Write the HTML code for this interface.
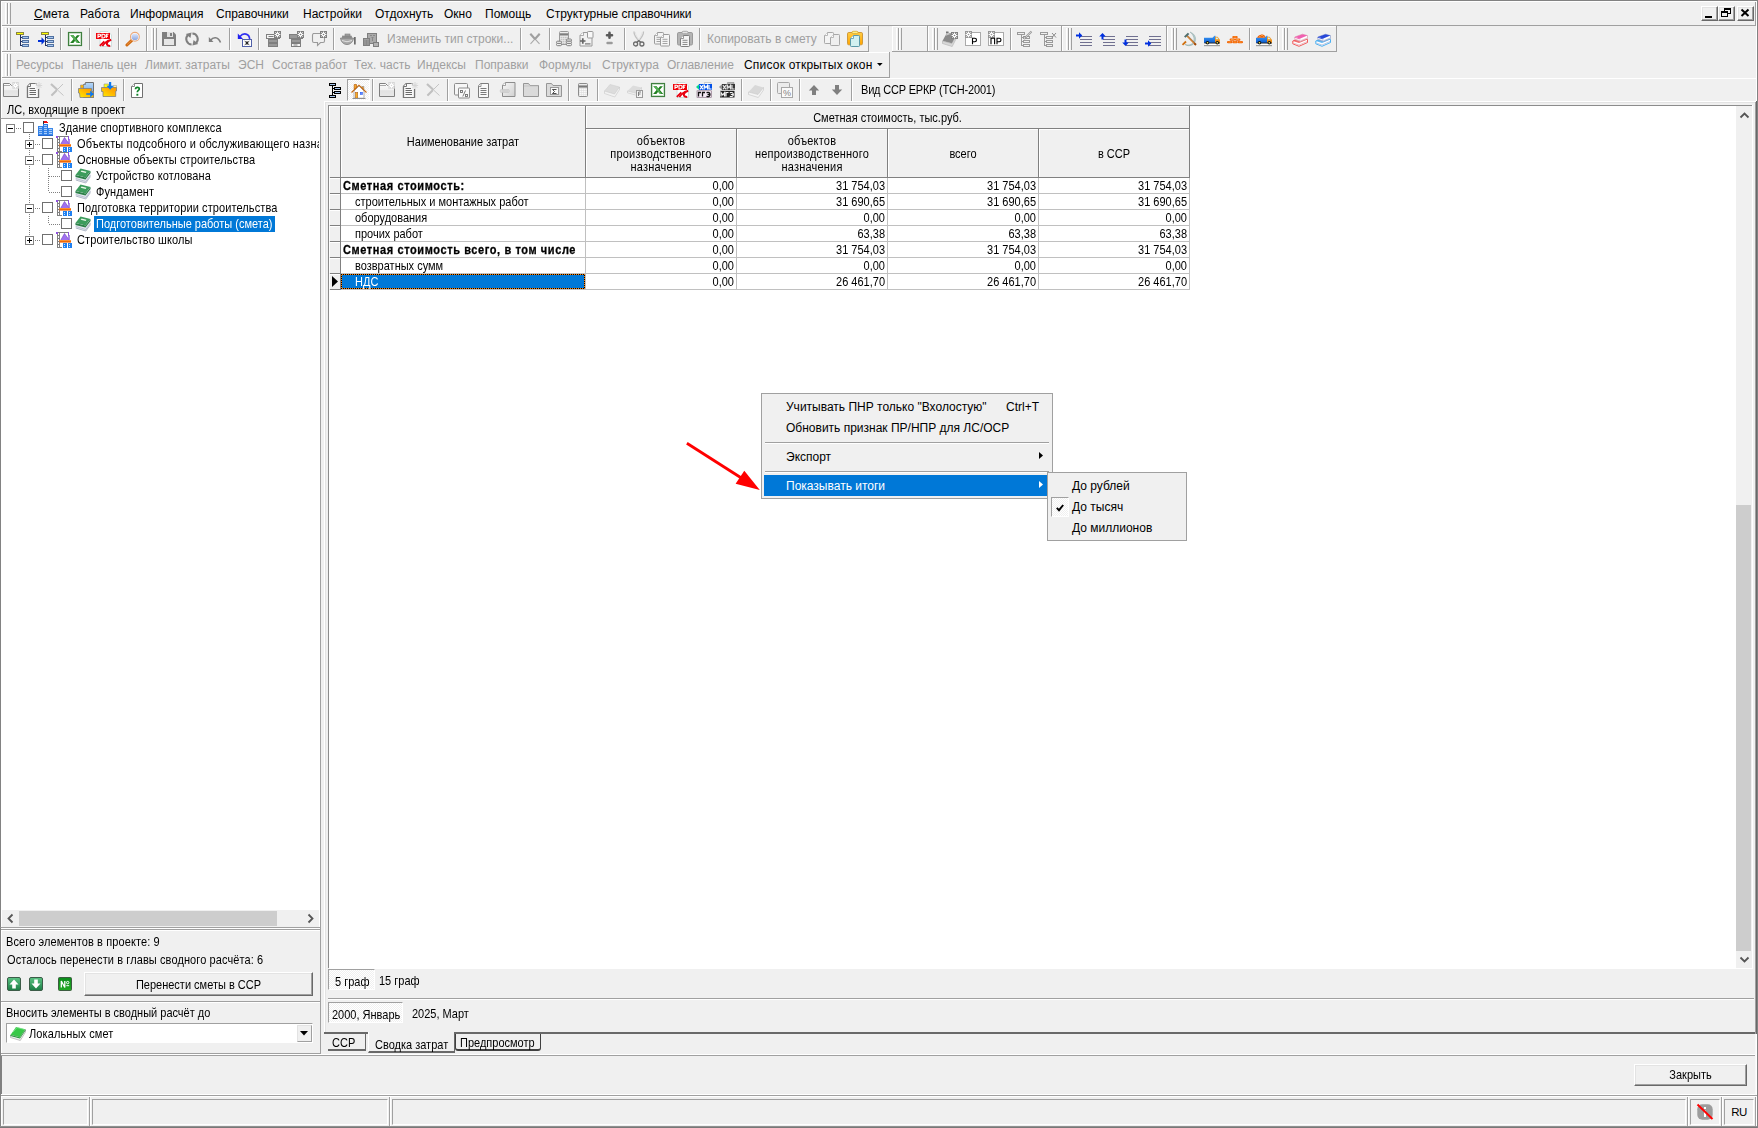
<!DOCTYPE html>
<html><head><meta charset="utf-8">
<style>
*{box-sizing:border-box;margin:0;padding:0}
html,body{width:1758px;height:1128px;overflow:hidden;background:#f0f0f0}
body{font-family:"Liberation Sans",sans-serif;font-size:11px;color:#000;position:relative}
.a{position:absolute}
.t{position:absolute;white-space:pre;line-height:14px;height:14px;transform:scaleY(1.1);transform-origin:0 11.5px;filter:grayscale(1)}
.m{font-size:12px;transform:none;filter:none}
.g{color:#a0a0a0}
.hl{position:absolute;height:1px}
.vl{position:absolute;width:1px}
.grip{position:absolute;width:5px;height:21px;border-left:1px solid #a0a0a0;border-right:1px solid #a0a0a0}
.grip:before{content:"";position:absolute;left:0;top:0;width:1px;height:100%;background:#fff;margin-left:0}
.grip2{position:absolute;width:6px;background:linear-gradient(90deg,#fff 0 1px,transparent 1px 2px,#a0a0a0 2px 3px,#fff 3px 4px,transparent 4px 5px,#a0a0a0 5px 6px)}
.sep{position:absolute;width:2px;height:22px;border-left:1px solid #a0a0a0;border-right:1px solid #fff}
.ic{position:absolute;width:16px;height:16px}
svg{position:absolute;overflow:visible}
.cb{position:absolute;width:11px;height:11px;border:1px solid #707070;background:#fff}
.pm{position:absolute;width:9px;height:9px;border:1px solid #848484;background:#fff}
.pm:before{content:"";position:absolute;left:1px;top:3px;width:5px;height:1px;background:#000}
.pm.p:after{content:"";position:absolute;left:3px;top:1px;width:1px;height:5px;background:#000}
.dh{position:absolute;height:1px;background-image:linear-gradient(90deg,#808080 50%,transparent 50%);background-size:2px 1px}
.dv{position:absolute;width:1px;background-image:linear-gradient(#808080 50%,transparent 50%);background-size:1px 2px}
.num{position:absolute;white-space:pre;line-height:14px;height:14px;text-align:right;width:60px;transform:scaleY(1.1);transform-origin:0 11.5px;filter:grayscale(1)}
.b{font-weight:bold;letter-spacing:0.6px;-webkit-text-stroke:0.25px #000}
.btn{position:absolute;border:1px solid;border-color:#fff #696969 #696969 #fff;box-shadow:inset -1px -1px 0 #a0a0a0,inset 1px 1px 0 #e3e3e3;background:#f0f0f0}
.dith{background-image:repeating-conic-gradient(#fff 0 25%,#f0f0f0 0 50%);background-size:2px 2px}
.sunk{position:absolute;border:1px solid;border-color:#a0a0a0 #fff #fff #a0a0a0}
</style></head><body>
<svg width="0" height="0" style="left:0;top:0"><defs><symbol id="tree" overflow="visible"><g shape-rendering="crispEdges"><rect x="1.5" y="1.5" width="7" height="2" fill="#ffff00" stroke="#8a8640"/><rect x="5" y="4" width="1" height="11" fill="#203060"/><rect x="5" y="6" width="2" height="1" fill="#203060"/><rect x="7.5" y="5.5" width="6" height="2" fill="#a8c8f0" stroke="#5070a0"/><rect x="5" y="10" width="2" height="1" fill="#203060"/><rect x="7.5" y="9.5" width="6" height="2" fill="#a8c8f0" stroke="#5070a0"/><rect x="5" y="14" width="2" height="1" fill="#203060"/><rect x="7.5" y="13.5" width="6" height="2" fill="#a8c8f0" stroke="#5070a0"/></g></symbol><symbol id="treearrow" overflow="visible"><g shape-rendering="crispEdges"><rect x="3.5" y="1.5" width="7" height="2" fill="#ffff00" stroke="#8a8640"/><rect x="7" y="4" width="1" height="11" fill="#203060"/><rect x="7" y="6" width="2" height="1" fill="#203060"/><rect x="9.5" y="5.5" width="6" height="2" fill="#a8c8f0" stroke="#5070a0"/><rect x="7" y="10" width="2" height="1" fill="#203060"/><rect x="9.5" y="9.5" width="6" height="2" fill="#a8c8f0" stroke="#5070a0"/><rect x="7" y="14" width="2" height="1" fill="#203060"/><rect x="9.5" y="13.5" width="6" height="2" fill="#a8c8f0" stroke="#5070a0"/></g><path d="M0 9h3.5v-2.8L7 10l-3.5 3.8V11H0z" fill="#0030d8" transform="translate(0,0)"/></symbol><symbol id="treegray" overflow="visible"><g shape-rendering="crispEdges"><rect x="2.5" y="1.5" width="7" height="2" fill="#f0f0f0" stroke="#7f7f7f"/><rect x="6" y="4" width="1" height="11" fill="#7f7f7f"/><rect x="6" y="6" width="2" height="1" fill="#7f7f7f"/><rect x="8.5" y="5.5" width="6" height="2" fill="#f0f0f0" stroke="#7f7f7f"/><rect x="6" y="10" width="2" height="1" fill="#7f7f7f"/><rect x="8.5" y="9.5" width="6" height="2" fill="#f0f0f0" stroke="#7f7f7f"/><rect x="6" y="14" width="2" height="1" fill="#7f7f7f"/><rect x="8.5" y="13.5" width="6" height="2" fill="#f0f0f0" stroke="#7f7f7f"/></g></symbol><symbol id="excel" overflow="visible"><rect x="1.500" y="1.500" width="13" height="13" fill="#fff" stroke="#3f7f3f" stroke-width="1.200"/><rect x="2.600" y="2.600" width="10.800" height="10.800" fill="none" stroke="#b8d8b8" stroke-width="0.700"/><path d="M3.300 4.300h3.300l1.600 2.100 1.800-2.100h2.900L9.700 7.800l3.500 4.200H10L8.200 9.700 6.300 12H3.100L6.800 7.800z" fill="#1f7f1f"/><path d="M3.300 4.300h3.300l5 7.700H10z" fill="#56b056"/></symbol><symbol id="pdf" overflow="visible"><path d="M4 0.500h8l3.500 3.500v11.500h-11.500z" fill="#fff" stroke="#c4d8d8" stroke-width="0.800"/><rect x="0" y="2" width="14" height="6" fill="#f00008"/><path d="M2 7V3.200h1.600a1.100 1.100 0 0 1 0 2.200H2M6 3.200V7h1.200a1.900 1.900 0 0 0 0 -3.800zM10.300 7V3.200H12.500M10.300 5.100H12" fill="none" stroke="#fff" stroke-width="1.100"/><path d="M3.800 14.800L8.300 10.300" stroke="#e80010" stroke-width="1.700"/><path d="M6.300 15C8 12.500 9.800 10.800 12.800 9.300" fill="none" stroke="#e80010" stroke-width="2"/><path d="M15.200 8.800C12 9.800 10.300 11.800 11 13.500C11.500 14.600 12.800 15 14.200 15" fill="none" stroke="#e80010" stroke-width="2.100"/></symbol><symbol id="mag" overflow="visible"><defs><linearGradient id="lg_m" x1="0" y1="0" x2="0" y2="1"><stop offset="0" stop-color="#dfe8fb"/><stop offset="1" stop-color="#8aa6e0"/></linearGradient></defs><path d="M1.900 14L6.800 9.300" stroke="#d06a10" stroke-width="3" stroke-linecap="round"/><path d="M2.200 13.500L6.500 9.400" stroke="#e89040" stroke-width="1" stroke-linecap="round"/><circle cx="9.900" cy="5.800" r="4.400" fill="#fff" stroke="#eaa878" stroke-width="1.100"/><circle cx="9.900" cy="5.800" r="3.400" fill="url(#lg_m)"/></symbol><symbol id="save" overflow="visible"><path d="M1 1h11.500L15 3.500V15H1z" fill="#7f7f7f"/><rect x="3" y="8" width="10" height="6" fill="#e6e6e6"/><rect x="6" y="1" width="6" height="5" fill="#e0e0e0"/><rect x="9" y="2" width="2" height="3" fill="#7f7f7f"/></symbol><symbol id="refresh" overflow="visible"><path d="M7.600 13.500A5.500 5.500 0 0 1 4 4" fill="none" stroke="#7f7f7f" stroke-width="2"/><path d="M8.400 2.500A5.500 5.500 0 0 1 12 12" fill="none" stroke="#7f7f7f" stroke-width="2"/><path d="M1.800 3L7.600 1.600 6.400 7z" fill="#7f7f7f"/><path d="M14.200 13L8.400 14.400 9.600 9z" fill="#7f7f7f"/></symbol><symbol id="undo" overflow="visible"><path d="M3.500 9.500C6 5.800 11 5.200 13.500 11.500" fill="none" stroke="#7f7f7f" stroke-width="1.600"/><path d="M1.800 6V11H6.500z" fill="#7f7f7f"/></symbol><symbol id="undoblue" overflow="visible"><path d="M3 5.500C6 1.800 12.500 1.500 12.800 9" fill="none" stroke="#3030f0" stroke-width="1.700"/><path d="M0.800 2.500V8H6z" fill="#2020f0"/><rect x="5.500" y="8.500" width="9" height="7" fill="#fff" stroke="#5060a8"/><path d="M7.700 10.200l4.600 3.600M12.300 10.200l-4.600 3.600M10 10v4" stroke="#000" stroke-width="0.800"/></symbol><symbol id="stack1" overflow="visible"><rect x="0.500" y="3.500" width="13" height="4" fill="#f4f4f4" stroke="#7f7f7f"/><path d="M2.500 5.500h5" stroke="#7f7f7f" stroke-width="1"/><rect x="2.500" y="8.500" width="9" height="3" fill="#999" stroke="#7f7f7f"/><rect x="2.500" y="12.500" width="9" height="3" fill="#999" stroke="#7f7f7f"/><rect x="8" y="0" width="7" height="7" fill="#7f7f7f"/><path d="M11.5 0.6v5.800M8.6 3.5h5.800M9.4 1.4l4.200 4.200M13.6 1.4l-4.200 4.200" stroke="#fff" stroke-width="1"/><circle cx="11.5" cy="3.5" r="1.900" fill="#fff"/><circle cx="11.5" cy="3.5" r="0.800" fill="#7f7f7f"/></symbol><symbol id="stack2" overflow="visible"><rect x="0.500" y="3.500" width="13" height="4" fill="#999" stroke="#7f7f7f"/><rect x="2.500" y="8.500" width="9" height="3" fill="#999" stroke="#7f7f7f"/><rect x="2.500" y="12.500" width="9" height="3" fill="#f4f4f4" stroke="#7f7f7f"/><path d="M4.500 14h4" stroke="#7f7f7f" stroke-width="1"/><rect x="8" y="0" width="7" height="7" fill="#7f7f7f"/><path d="M11.5 0.6v5.800M8.6 3.5h5.800M9.4 1.4l4.200 4.200M13.6 1.4l-4.200 4.200" stroke="#fff" stroke-width="1"/><circle cx="11.5" cy="3.5" r="1.900" fill="#fff"/><circle cx="11.5" cy="3.5" r="0.800" fill="#7f7f7f"/></symbol><symbol id="bubble" overflow="visible"><path d="M2 2.500h8M13.500 6.500v3.500q0 1.500 -1.500 1.500h-2.500l-3 3v-3h-3.500q-1.500 0 -1.500 -1.500v-6q0 -1.500 1.500 -1.500" fill="none" stroke="#9a9a9a" stroke-width="1.100"/><rect x="9" y="0" width="7" height="7" fill="#7f7f7f"/><path d="M12.5 0.6v5.800M9.6 3.5h5.800M10.4 1.4l4.200 4.200M14.6 1.4l-4.200 4.200" stroke="#fff" stroke-width="1"/><circle cx="12.5" cy="3.5" r="1.900" fill="#fff"/><circle cx="12.5" cy="3.5" r="0.800" fill="#7f7f7f"/></symbol><symbol id="bowl" overflow="visible"><path d="M0.500 7h13c-0.500 4-3 6.500-6.500 6.500S1 11 0.500 7z" fill="#a8a8a8" stroke="#7f7f7f" stroke-width="0.800"/><rect x="2.500" y="5" width="9" height="2" fill="#909090" stroke="#7f7f7f" stroke-width="0.600"/><rect x="5" y="3" width="5" height="2" fill="#a0a0a0" stroke="#7f7f7f" stroke-width="0.600"/><path d="M2 9.500q5 2.500 10 0" fill="none" stroke="#e0e0e0" stroke-width="1"/><rect x="14.300" y="6" width="1.200" height="7.500" fill="#333"/></symbol><symbol id="bldgray" overflow="visible"><rect x="4.500" y="0.500" width="9" height="10" fill="#aaa" stroke="#7f7f7f"/><rect x="0.500" y="5.500" width="6" height="7" fill="#a0a0a0" stroke="#7f7f7f"/><path d="M2 7v5M3.500 7v5M5 7v5" stroke="#7f7f7f" stroke-width="0.700"/><path d="M7 2.500h2M10 2.500h2M8.500 4.500h2M9.500 5v3" stroke="#7f7f7f" stroke-width="0.800"/><rect x="10.500" y="9.500" width="5" height="4" fill="#b4b4b4" stroke="#7f7f7f"/></symbol><symbol id="xgray" overflow="visible"><path d="M1.500 1L10.500 10.800" stroke="#a8a8a8" stroke-width="1.100"/><path d="M10.500 1L1.500 10.800" stroke="#a8a8a8" stroke-width="1.100"/><path d="M1.300 0.800l4.700 5.200M10.700 0.800L6 6" stroke="#a0a0a0" stroke-width="2.100"/></symbol><symbol id="calccoin" overflow="visible"><rect x="3.500" y="0.500" width="9" height="13" rx="1" fill="#ececec" stroke="#9a9a9a"/><rect x="4" y="2.300" width="8" height="2.200" fill="#7f7f7f"/><g fill="#c4c4c4"><rect x="4.6" y="5.8" width="1.500" height="1.300"/><rect x="4.6" y="7.8" width="1.500" height="1.300"/><rect x="4.6" y="9.8" width="1.500" height="1.300"/><rect x="4.6" y="11.7" width="1.500" height="1.300"/><rect x="6.6" y="5.8" width="1.500" height="1.300"/><rect x="6.6" y="7.8" width="1.500" height="1.300"/><rect x="6.6" y="9.8" width="1.500" height="1.300"/><rect x="6.6" y="11.7" width="1.500" height="1.300"/><rect x="8.6" y="5.8" width="1.500" height="1.300"/><rect x="8.6" y="7.8" width="1.500" height="1.300"/><rect x="8.6" y="9.8" width="1.500" height="1.300"/><rect x="8.6" y="11.7" width="1.500" height="1.300"/><rect x="10.4" y="5.8" width="1.500" height="1.300"/><rect x="10.4" y="7.8" width="1.500" height="1.300"/><rect x="10.4" y="9.8" width="1.500" height="1.300"/><rect x="10.4" y="11.7" width="1.500" height="1.300"/></g><g fill="#f0f0f0" stroke="#7f7f7f" stroke-width="1"><rect x="0.500" y="10.200" width="5" height="2.300" rx="1.100"/><rect x="0.500" y="12.400" width="5" height="2.300" rx="1.100"/><rect x="10.500" y="8" width="5" height="2.300" rx="1.100"/><rect x="10.500" y="10.200" width="5" height="2.300" rx="1.100"/><rect x="10.500" y="12.400" width="5" height="2.300" rx="1.100"/></g></symbol><symbol id="docpm" overflow="visible"><path d="M4 1.500h9v13.500h-12v-10.500z" fill="#f2f2f2" stroke="#9a9a9a"/><path d="M1 4.500h3.500v-3" fill="#fff" stroke="#9a9a9a" stroke-width="0.800"/><rect x="8.500" y="0.500" width="5.500" height="6.500" rx="0.800" fill="#f8f8f8" stroke="#9a9a9a"/><path d="M1 10h5.500M3.800 7.300v5.400" stroke="#666" stroke-width="1.700"/><rect x="6" y="12" width="5.500" height="1.700" fill="#9a9a9a"/></symbol><symbol id="pm" overflow="visible"><path d="M3.500 1.800v5M1 4.300h5" stroke="#5a5a5a" stroke-width="2.600" stroke-linecap="round"/><rect x="0.300" y="10.800" width="6.500" height="2.500" rx="1.200" fill="#9a9a9a"/></symbol><symbol id="scissors" overflow="visible"><path d="M2 0.500c-0.300 3 1.500 6 6.800 11.500M11.500 0.500c0.300 3-1.500 6-6.800 11.500" fill="none" stroke="#c0c0c0" stroke-width="1.300"/><path d="M3.200 1c0.500 3 2 5.500 4 8M10.300 1c-0.500 3-2 5.500-4 8" fill="none" stroke="#e4e4e4" stroke-width="1"/><ellipse cx="3.600" cy="13" rx="2" ry="2" fill="none" stroke="#6c6c6c" stroke-width="1.300"/><ellipse cx="9.900" cy="13" rx="2" ry="2" fill="none" stroke="#6c6c6c" stroke-width="1.300"/><path d="M4.800 11.300L6.800 9.600 8.800 11.300" fill="none" stroke="#6c6c6c" stroke-width="1.300"/></symbol><symbol id="copy" overflow="visible"><path d="M3.5 1.5h5.2q0.800 0 0.800 0.800v9.9q0 0.800 -0.800 0.800h-7.4q-0.800 0 -0.800 -0.800v-7.7z" fill="#f4f4f4" stroke="#9a9a9a" stroke-width="1"/><path d="M0.5 4.5h3v-3" fill="#fff" stroke="#9a9a9a" stroke-width="0.8"/><path d="M2.5 6.3h5" stroke="#9a9a9a" stroke-width="0.900"/><path d="M2.5 8.4h5" stroke="#9a9a9a" stroke-width="0.900"/><path d="M2.5 10.5h5" stroke="#9a9a9a" stroke-width="0.900"/><path d="M9.5 3.5h5.2q0.800 0 0.800 0.800v9.9q0 0.800 -0.800 0.800h-7.4q-0.800 0 -0.800 -0.800v-7.7z" fill="#f6f6f6" stroke="#9a9a9a" stroke-width="1"/><path d="M6.5 6.5h3v-3" fill="#fff" stroke="#9a9a9a" stroke-width="0.8"/><path d="M8.5 8.3h5" stroke="#9a9a9a" stroke-width="0.900"/><path d="M8.5 10.4h5" stroke="#9a9a9a" stroke-width="0.900"/><path d="M8.5 12.5h5" stroke="#9a9a9a" stroke-width="0.900"/></symbol><symbol id="paste" overflow="visible"><rect x="0.500" y="1.500" width="15" height="12.500" rx="1.300" fill="#b4b4b4" stroke="#9a9a9a"/><rect x="5" y="0.300" width="6" height="2.400" rx="1.200" fill="#e4e4e4" stroke="#9a9a9a" stroke-width="0.800"/><path d="M6.5 4.5h5.2q0.800 0 0.800 0.800v9.4q0 0.800 -0.800 0.800h-7.4q-0.800 0 -0.800 -0.800v-7.2z" fill="#f4f4f4" stroke="#7f7f7f" stroke-width="1"/><path d="M3.5 7.5h3v-3" fill="#fff" stroke="#7f7f7f" stroke-width="0.8"/><path d="M5.5 9.3h5" stroke="#7f7f7f" stroke-width="0.900"/><path d="M5.5 11.4h5" stroke="#7f7f7f" stroke-width="0.900"/><path d="M5.5 13.5h5" stroke="#7f7f7f" stroke-width="0.900"/></symbol><symbol id="copylight" overflow="visible"><path d="M3.5 1.5h5.2q0.800 0 0.800 0.800v9.4q0 0.800 -0.800 0.800h-7.4q-0.800 0 -0.800 -0.800v-7.2z" fill="#f4f4f4" stroke="#a8a8a8" stroke-width="1"/><path d="M0.5 4.5h3v-3" fill="#fff" stroke="#a8a8a8" stroke-width="0.8"/><path d="M9.5 3.5h5.2q0.800 0 0.800 0.800v9.4q0 0.800 -0.800 0.800h-7.4q-0.800 0 -0.800 -0.800v-7.2z" fill="#efefef" stroke="#a8a8a8" stroke-width="1"/><path d="M6.5 6.5h3v-3" fill="#fff" stroke="#a8a8a8" stroke-width="0.8"/></symbol><symbol id="pasteyel" overflow="visible"><defs><linearGradient id="lg_y" x1="0" y1="0" x2="0" y2="1"><stop offset="0" stop-color="#ffcc44"/><stop offset="1" stop-color="#ffa400"/></linearGradient></defs><rect x="0.500" y="1.500" width="15" height="12.300" rx="1.300" fill="url(#lg_y)" stroke="#d09a3a"/><rect x="5" y="0.300" width="6" height="2.300" rx="1.100" fill="#fff08a" stroke="#d8a830" stroke-width="0.800"/><path d="M6.5 4.5h5.2q0.800 0 0.800 0.800v9.4q0 0.800 -0.800 0.800h-7.4q-0.800 0 -0.800 -0.800v-7.2z" fill="#d2f0f0" stroke="#5a98a8" stroke-width="1"/><path d="M3.5 7.5h3v-3" fill="#fff" stroke="#5a98a8" stroke-width="0.8"/></symbol><symbol id="bookgear" overflow="visible"><path d="M0.500 10L5 1.500l10 2L10 12.500z" fill="#8a8a8a"/><path d="M3 5l3-3.500 2.500 1.500z" fill="#c8c8c8"/><path d="M0.500 10L10 12.500l5-9v2.500L10.200 15.500 0.500 12.500z" fill="#d8d8d8" stroke="#b0b0b0" stroke-width="0.600"/><path d="M4 0.500h2.500v1.500H4z" fill="#777"/><rect x="9" y="1" width="7" height="7" fill="#7f7f7f"/><path d="M12.5 1.6v5.800M9.6 4.5h5.800M10.4 2.4l4.200 4.200M14.6 2.4l-4.200 4.200" stroke="#fff" stroke-width="1"/><circle cx="12.5" cy="4.5" r="1.900" fill="#fff"/><circle cx="12.5" cy="4.5" r="0.800" fill="#7f7f7f"/></symbol><symbol id="pboxP" overflow="visible"><rect x="0.500" y="1.500" width="15" height="13" fill="#fff" stroke="#aaaaaa"/><rect x="0" y="0" width="7" height="7" fill="#959595"/><path d="M3.5 0.6v5.800M0.6 3.5h5.800M1.4 1.4l4.200 4.200M5.6 1.4l-4.200 4.200" stroke="#fff" stroke-width="1"/><circle cx="3.5" cy="3.5" r="1.900" fill="#fff"/><circle cx="3.5" cy="3.5" r="0.800" fill="#959595"/><path d="M7.500 13.300v-6h2.300a1.700 1.700 0 0 1 0 3.400H7.500" fill="none" stroke="#000" stroke-width="1.100"/></symbol><symbol id="pboxPR" overflow="visible"><rect x="0.500" y="1.500" width="15" height="13" fill="#fff" stroke="#aaaaaa"/><rect x="0" y="0" width="7" height="7" fill="#959595"/><path d="M3.5 0.6v5.800M0.6 3.5h5.800M1.4 1.4l4.200 4.200M5.6 1.4l-4.200 4.200" stroke="#fff" stroke-width="1"/><circle cx="3.5" cy="3.5" r="1.900" fill="#fff"/><circle cx="3.5" cy="3.5" r="0.800" fill="#959595"/><path d="M3 13.300v-6h3.600v6M9 13.300v-6h2.300a1.700 1.700 0 0 1 0 3.400H9" fill="none" stroke="#000" stroke-width="1.100"/></symbol><symbol id="treeedit" overflow="visible"><g shape-rendering="crispEdges"><rect x="0.500" y="1.500" width="7" height="2" fill="#f0f0f0" stroke="#9a9a9a"/><rect x="4" y="4" width="1" height="11" fill="#9a9a9a"/><rect x="4" y="6" width="2" height="1" fill="#9a9a9a"/><rect x="6.500" y="5.500" width="6" height="2" fill="#f0f0f0" stroke="#9a9a9a"/><rect x="4" y="10" width="2" height="1" fill="#9a9a9a"/><rect x="6.500" y="9.500" width="6" height="2" fill="#f0f0f0" stroke="#9a9a9a"/><rect x="4" y="14" width="2" height="1" fill="#9a9a9a"/><rect x="6.500" y="13.500" width="6" height="2" fill="#f0f0f0" stroke="#9a9a9a"/></g><path d="M8.500 6.500L14.500 0.500" stroke="#9a9a9a" stroke-width="2"/><path d="M9 6L14 1" stroke="#e0e0e0" stroke-width="0.700"/><circle cx="7.600" cy="7" r="1.100" fill="#e8e8e8" stroke="#7f7f7f" stroke-width="0.600"/></symbol><symbol id="treex" overflow="visible"><g shape-rendering="crispEdges"><rect x="0.500" y="1.500" width="7" height="2" fill="#f0f0f0" stroke="#9a9a9a"/><rect x="4" y="4" width="1" height="11" fill="#9a9a9a"/><rect x="4" y="6" width="2" height="1" fill="#9a9a9a"/><rect x="6.500" y="5.500" width="6" height="2" fill="#f0f0f0" stroke="#9a9a9a"/><rect x="4" y="10" width="2" height="1" fill="#9a9a9a"/><rect x="6.500" y="9.500" width="6" height="2" fill="#f0f0f0" stroke="#9a9a9a"/><rect x="4" y="14" width="2" height="1" fill="#9a9a9a"/><rect x="6.500" y="13.500" width="6" height="2" fill="#f0f0f0" stroke="#9a9a9a"/></g><path d="M12 2l4 4.500M16 2l-4 4.500" stroke="#7f7f7f" stroke-width="0.900"/></symbol><symbol id="ln1" overflow="visible"><rect x="4" y="5" width="12" height="1" fill="#707090" shape-rendering="crispEdges"/><rect x="4" y="8" width="12" height="1" fill="#707090" shape-rendering="crispEdges"/><rect x="4" y="11" width="12" height="1" fill="#707090" shape-rendering="crispEdges"/><rect x="4" y="14" width="12" height="1" fill="#707090" shape-rendering="crispEdges"/><path d="M0 3.500h3v-2.300L6.300 4.500 3 7.800V5.500H0z" fill="#0030e0"/></symbol><symbol id="ln2" overflow="visible"><rect x="4" y="5" width="12" height="1" fill="#707090" shape-rendering="crispEdges"/><rect x="4" y="8" width="12" height="1" fill="#707090" shape-rendering="crispEdges"/><rect x="4" y="11" width="12" height="1" fill="#707090" shape-rendering="crispEdges"/><rect x="4" y="14" width="12" height="1" fill="#707090" shape-rendering="crispEdges"/><path d="M2.500 8.500v-3H0.200L3.500 2 6.800 5.500H4.500v3z" fill="#0030e0"/></symbol><symbol id="ln3" overflow="visible"><rect x="4" y="5" width="12" height="1" fill="#707090" shape-rendering="crispEdges"/><rect x="4" y="8" width="12" height="1" fill="#707090" shape-rendering="crispEdges"/><rect x="4" y="11" width="12" height="1" fill="#707090" shape-rendering="crispEdges"/><rect x="4" y="14" width="12" height="1" fill="#707090" shape-rendering="crispEdges"/><path d="M2.500 8.500v3H0.200L3.500 15l3.300-3.500H4.500v-3z" fill="#0030e0"/></symbol><symbol id="ln4" overflow="visible"><rect x="4" y="5" width="12" height="1" fill="#707090" shape-rendering="crispEdges"/><rect x="4" y="8" width="12" height="1" fill="#707090" shape-rendering="crispEdges"/><rect x="4" y="11" width="12" height="1" fill="#707090" shape-rendering="crispEdges"/><rect x="4" y="14" width="12" height="1" fill="#707090" shape-rendering="crispEdges"/><path d="M0 11.500h3v-2.300L6.300 12.500 3 15.800V13.500H0z" fill="#0030e0"/></symbol><symbol id="hammer" overflow="visible"><path d="M9 1c6 2 7.500 8.500 3 12.500c-2.500 1.800-6 1.500-8 0c3.500 1 6 0.500 7.800-1.500c2.500-3.300 1-8-2.800-11z" fill="#b4cccc" stroke="#809c9c" stroke-width="0.400"/><path d="M1.500 13.800l3.500-3.300" stroke="#d07010" stroke-width="1.800"/><path d="M5.500 4.500L14.500 13.500" stroke="#d08030" stroke-width="1.500"/><path d="M5.500 4.500L14.500 13.500" stroke="#804010" stroke-width="0.500" transform="translate(0.600,-0.600)"/><path d="M3 5.500l3.800-3.800 1.500 1.300-3.800 3.800z" fill="#507070"/><path d="M13.300 12.300l1.700 1.700" stroke="#a04808" stroke-width="1.800"/></symbol><symbol id="truck" overflow="visible"><defs><linearGradient id="lg_tb" x1="0" y1="0" x2="0" y2="1"><stop offset="0" stop-color="#3c9cf8"/><stop offset="1" stop-color="#0c5cd0"/></linearGradient></defs><rect x="0" y="14" width="16" height="1.200" fill="#888" opacity="0.800"/><rect x="1" y="12.500" width="14" height="1.500" fill="#fff"/><path d="M0 6.700h8.500l2-2h1v7.300h-11.500z" fill="url(#lg_tb)"/><path d="M11 5.800h2.500l2.500 3v3.200h-5z" fill="#f09018"/><path d="M11.800 6.500h1.500l1.300 1.700h-2.800z" fill="#c8f4f8"/><rect x="0.500" y="11.600" width="15.500" height="0.900" fill="#222"/><circle cx="3.500" cy="11.800" r="1.800" fill="#101010"/><circle cx="3.500" cy="11.800" r="0.800" fill="#f8f060"/><circle cx="13.300" cy="11.800" r="1.800" fill="#101010"/><circle cx="13.300" cy="11.800" r="0.800" fill="#f8f060"/></symbol><symbol id="truckload" overflow="visible"><defs><linearGradient id="lg_tb" x1="0" y1="0" x2="0" y2="1"><stop offset="0" stop-color="#3c9cf8"/><stop offset="1" stop-color="#0c5cd0"/></linearGradient></defs><rect x="0" y="14" width="16" height="1.200" fill="#888" opacity="0.800"/><rect x="1" y="12.500" width="14" height="1.500" fill="#fff"/><path d="M0 6.700h8.500l2-2h1v7.300h-11.500z" fill="url(#lg_tb)"/><path d="M11 5.800h2.500l2.500 3v3.200h-5z" fill="#f09018"/><path d="M11.800 6.500h1.500l1.300 1.700h-2.800z" fill="#c8f4f8"/><rect x="0.500" y="11.600" width="15.500" height="0.900" fill="#222"/><circle cx="3.500" cy="11.800" r="1.800" fill="#101010"/><circle cx="3.500" cy="11.800" r="0.800" fill="#f8f060"/><circle cx="13.300" cy="11.800" r="1.800" fill="#101010"/><circle cx="13.300" cy="11.800" r="0.800" fill="#f8f060"/><path d="M1 6.700c1-1.800 2.500-2.800 4.500-3.200s3.500 0.800 4 2.700l-0.500 0.500z" fill="#e05808"/><ellipse cx="6" cy="4.500" rx="1.300" ry="0.700" fill="#ff9838"/><ellipse cx="3.800" cy="5.600" rx="1.100" ry="0.600" fill="#ff9838"/><ellipse cx="7.800" cy="5.800" rx="0.900" ry="0.500" fill="#ffa848"/></symbol><symbol id="bricks" overflow="visible"><rect x="5.3" y="5" width="5.400" height="2.300" rx="1.150" fill="#f06000"/><rect x="6.3" y="5.5" width="3.400" height="0.900" rx="0.450" fill="#ff9a38"/><rect x="2.6" y="7.5" width="5.400" height="2.300" rx="1.150" fill="#f06000"/><rect x="3.6" y="8.0" width="3.400" height="0.900" rx="0.450" fill="#ff9a38"/><rect x="8" y="7.5" width="5.400" height="2.300" rx="1.150" fill="#f06000"/><rect x="9" y="8.0" width="3.400" height="0.900" rx="0.450" fill="#ff9a38"/><rect x="0" y="10" width="5.400" height="2.300" rx="1.150" fill="#f06000"/><rect x="1" y="10.5" width="3.400" height="0.900" rx="0.450" fill="#ff9a38"/><rect x="5.3" y="10" width="5.400" height="2.300" rx="1.150" fill="#f06000"/><rect x="6.3" y="10.5" width="3.400" height="0.900" rx="0.450" fill="#ff9a38"/><rect x="10.6" y="10" width="5.400" height="2.300" rx="1.150" fill="#f06000"/><rect x="11.6" y="10.5" width="3.400" height="0.900" rx="0.450" fill="#ff9a38"/></symbol><symbol id="booksred" overflow="visible"><path d="M0.800 10L9.500 6.800l6 1.700v3L7 15.300 0.800 12.800z" fill="#fff" stroke="#f04848" stroke-width="0.900"/><path d="M0.800 10L9.500 6.800l6 1.700L7 12z" fill="#f04848" opacity="0.800"/><path d="M1.500 12L7 14 15 10.500" fill="none" stroke="#d090a0" stroke-width="0.500"/><path d="M2.800 6L10.500 3.200l5 1.400v3L8.300 10.500 2.800 8.600z" fill="#fff" stroke="#d090a0" stroke-width="0.600"/><path d="M2.800 6L10.500 3.200l5 1.400L8.300 7.600z" fill="#f060b0"/><path d="M2.800 6L8.300 7.600v0.900L2.800 6.800z" fill="#f060b0"/><path d="M3.500 8.300L8.300 9.800 15 7" fill="none" stroke="#d090a0" stroke-width="0.500"/></symbol><symbol id="booksblue" overflow="visible"><path d="M0.800 10L9.500 6.800l6 1.700v3L7 15.300 0.800 12.800z" fill="#fff" stroke="#38a8f0" stroke-width="0.900"/><path d="M0.800 10L9.500 6.800l6 1.700L7 12z" fill="#38a8f0" opacity="0.800"/><path d="M1.500 12L7 14 15 10.500" fill="none" stroke="#8090c0" stroke-width="0.500"/><path d="M2.800 6L10.500 3.200l5 1.400v3L8.300 10.500 2.800 8.600z" fill="#fff" stroke="#8090c0" stroke-width="0.600"/><path d="M2.800 6L10.500 3.200l5 1.400L8.300 7.600z" fill="#2848d8"/><path d="M2.800 6L8.300 7.600v0.900L2.800 6.800z" fill="#2848d8"/><path d="M3.500 8.300L8.300 9.800 15 7" fill="none" stroke="#8090c0" stroke-width="0.500"/></symbol><symbol id="foldernew" overflow="visible"><defs><linearGradient id="lg_f" x1="0" y1="0" x2="0" y2="1"><stop offset="0" stop-color="#fbfbfb"/><stop offset="0.500" stop-color="#f0f0f0"/><stop offset="0.550" stop-color="#e2e2e2"/><stop offset="1" stop-color="#e8e8e8"/></linearGradient></defs><path d="M0.500 1.500h6l2 2h7v11h-15z" fill="url(#lg_f)" stroke="#808080"/><path d="M1 3.500h6" stroke="#a8a8a8" stroke-width="1"/><rect x="9.300" y="0" width="6.500" height="6.700" fill="#d6d6d6"/><circle cx="12.500" cy="3.400" r="1.900" fill="#fff"/><path d="M12.500 0.500v5.800M9.600 3.400h5.800M10.500 1.400l4 4M14.500 1.400l-4 4" stroke="#fff" stroke-width="0.900"/><circle cx="12.500" cy="3.400" r="0.700" fill="#d6d6d6"/></symbol><symbol id="docnew" overflow="visible"><path d="M3.500 1.500h5M11.500 7v8.500h-11v-11l3-3" fill="none" stroke="#757575" stroke-width="1.200"/><path d="M3.500 1.500h5.500v5.500h2.500v8.500h-11v-11z" fill="#f8f8f8"/><path d="M3.500 1.500h5M11.500 7v8.500h-11v-11l3-3" fill="none" stroke="#757575" stroke-width="1.200"/><path d="M0.500 4.500h3v-3" fill="#fff" stroke="#757575" stroke-width="1"/><path d="M2.500 6.500h5.500M2.500 8.500h6.500M2.500 10.500h6.500M2.500 12.500h6.500" stroke="#6a6a6a" stroke-width="1"/><circle cx="9.400" cy="1.800" r="0.600" fill="#757575"/><path d="M12 0v7M8.800 3.500h6.400M9.800 1.200l4.500 4.600M14.300 1.200l-4.500 4.600" stroke="#d4d4d4" stroke-width="0.900"/></symbol><symbol id="xlight" overflow="visible"><path d="M1 2l12.500 11.500" stroke="#c4c4c4" stroke-width="1"/><path d="M13 2L1.500 13.500" stroke="#c4c4c4" stroke-width="1"/><path d="M1 2l6 5.500" stroke="#c0c0c0" stroke-width="2.200"/><path d="M1.500 13.500L6.500 8.500" stroke="#c0c0c0" stroke-width="2.200"/></symbol><symbol id="folderarrow" overflow="visible"><defs><linearGradient id="lg_fy" x1="0" y1="1" x2="1" y2="0"><stop offset="0" stop-color="#ffee00"/><stop offset="0.600" stop-color="#ffb000"/><stop offset="1" stop-color="#ff9400"/></linearGradient><linearGradient id="lg_fb" x1="0" y1="0" x2="0" y2="1"><stop offset="0" stop-color="#b8d8f8"/><stop offset="1" stop-color="#5898e0"/></linearGradient></defs><path d="M7.500 0.500h8v15h-10v-13z" fill="url(#lg_fb)" stroke="#707070"/><path d="M5.500 2.500h2v-2" fill="#fff" stroke="#707070" stroke-width="0.800"/><path d="M2.500 3h3v3h-3z" fill="#ffb400" stroke="#909090" stroke-width="0.600"/><path d="M0.500 6.500h13v3h2v6h-13.500l-0.500-4.500h-1z" fill="url(#lg_fy)" stroke="#808080" stroke-width="0.800"/><path d="M8.200 11.200h4v-2.700l3.700 3.500-3.700 3.500v-2.700h-4z" fill="#0a78f0"/></symbol><symbol id="folderdown" overflow="visible"><defs><linearGradient id="lg_fy" x1="0" y1="1" x2="1" y2="0"><stop offset="0" stop-color="#ffee00"/><stop offset="0.600" stop-color="#ffb000"/><stop offset="1" stop-color="#ff9400"/></linearGradient><linearGradient id="lg_fb" x1="0" y1="0" x2="0" y2="1"><stop offset="0" stop-color="#b8d8f8"/><stop offset="1" stop-color="#5898e0"/></linearGradient></defs><path d="M3 3h4.500v3.500h-4.500z" fill="#ffff10" stroke="#909090" stroke-width="0.600"/><path d="M12.500 4.500h3v5h-3z" fill="#fff4a8" stroke="#a0a0a0" stroke-width="0.600"/><path d="M0.500 6.500h15v3.500h-0.800v5.500h-12.700v-5h-1.500z" fill="url(#lg_fy)" stroke="#808080" stroke-width="0.800"/><path d="M8 1h2.200v3.800h2.500L9.100 8.800 5.500 4.800H8z" fill="#0a78f0"/></symbol><symbol id="docq" overflow="visible"><path d="M4.500 1.500h8v14h-11v-11z" fill="#fff" stroke="#707070"/><path d="M1.500 4.500h3v-3" fill="#fff" stroke="#707070" stroke-width="0.800"/><path d="M5.500 7.300c0-2.600 3.800-2.600 3.800-0.300c0 1.400-2 1.500-2 3.200" fill="none" stroke="#0f8228" stroke-width="1.700"/><rect x="6.400" y="11.800" width="1.900" height="1.900" fill="#0f8228"/></symbol><symbol id="treeblack" overflow="visible"><g shape-rendering="crispEdges"><rect x="4" y="2" width="1" height="11" fill="#000"/><rect x="5" y="5" width="2" height="1" fill="#000"/><rect x="5" y="9" width="2" height="1" fill="#000"/><rect x="1" y="0" width="7" height="3" fill="#000"/><rect x="2" y="1" width="5" height="1" fill="#a8c8f0"/><rect x="6" y="4" width="7" height="3" fill="#000"/><rect x="7" y="5" width="5" height="1" fill="#a8c8f0"/><rect x="6" y="8" width="7" height="3" fill="#000"/><rect x="7" y="9" width="5" height="1" fill="#a8c8f0"/><rect x="1" y="12" width="7" height="3" fill="#000"/><rect x="2" y="13" width="5" height="1" fill="#a8c8f0"/></g></symbol><symbol id="house" overflow="visible"><path d="M3.200 1.500h2.300v4.500h-2.300z" fill="#f8a828" stroke="#b86010" stroke-width="0.700"/><path d="M10.800 3.500h2v3.500h-2z" fill="#f0a030" stroke="#909090" stroke-width="0.700"/><path d="M3 8L8 3l5 5V15.200H3z" fill="#fff" stroke="#a0a0a0" stroke-width="0.800"/><path d="M0.500 9.500L8 2.200 15.500 9.500" fill="none" stroke="#c86a10" stroke-width="1.100"/><rect x="4.500" y="9.500" width="2.200" height="5.700" fill="#f8b020" stroke="#b06020" stroke-width="0.600"/><rect x="9" y="9" width="2.800" height="2.800" fill="#3868f8"/><path d="M10.400 9v2.800M9 10.400h2.800" stroke="#88a8ff" stroke-width="0.400"/><rect x="1.500" y="15" width="13" height="1" fill="#909090"/></symbol><symbol id="pctwin" overflow="visible"><rect x="0.500" y="0.500" width="13" height="11.500" rx="1" fill="#f6f6f6" stroke="#8c8c8c"/><rect x="4.500" y="5" width="11" height="10" rx="0.500" fill="#fafafa" stroke="#8c8c8c"/><rect x="6.500" y="7.500" width="2" height="2" fill="none" stroke="#707070" stroke-width="0.900"/><rect x="11.500" y="11.500" width="2" height="2" fill="none" stroke="#707070" stroke-width="0.900"/><path d="M11.500 7.500L8.800 13.500" stroke="#707070" stroke-width="0.900"/></symbol><symbol id="doclines" overflow="visible"><path d="M3.500 1.500h8v14h-10v-11.500z" fill="#f8f8f8" stroke="#7c7c7c"/><path d="M1.500 4.500h2.500v-3" fill="#fff" stroke="#7c7c7c" stroke-width="0.800"/><path d="M3.500 6.500h6M3.500 8.500h6M3.500 10.500h6M3.500 12.500h6" stroke="#6a6a6a" stroke-width="0.900"/></symbol><symbol id="doctag" overflow="visible"><defs><linearGradient id="lg_dt" x1="0" y1="0" x2="1" y2="1"><stop offset="0" stop-color="#f8f8f8"/><stop offset="1" stop-color="#d0d0d0"/></linearGradient></defs><path d="M5.500 0.500h9.500v14h-12.500v-11.500z" fill="url(#lg_dt)" stroke="#8c8c8c"/><path d="M2.500 3.500h3v-3" fill="#fff" stroke="#8c8c8c" stroke-width="0.800"/><rect x="0.300" y="7.500" width="9" height="3" rx="1" fill="#e4e4e4" stroke="#c0c0c0" stroke-width="0.600"/><rect x="1.500" y="8.500" width="7" height="1" fill="#bdbdbd"/></symbol><symbol id="folder" overflow="visible"><path d="M0.500 1.500h5l1.500 2h8.500v11h-15z" fill="#dadada" stroke="#969696"/><path d="M1 4h14" stroke="#c0c0c0" stroke-width="0.800"/></symbol><symbol id="foldersum" overflow="visible"><path d="M0.500 1.500h5l1.500 2h8.500v11h-15z" fill="#dadada" stroke="#969696"/><rect x="4.500" y="5.500" width="8" height="7" fill="#fafafa" stroke="#9a9a9a"/><path d="M10.500 7.500h-4l2 2-2 2h4" fill="none" stroke="#222" stroke-width="0.800"/></symbol><symbol id="calc" overflow="visible"><rect x="3.500" y="0.500" width="9" height="13" rx="1" fill="#dadada" stroke="#8c8c8c"/><rect x="4" y="2.500" width="8" height="2" fill="#7a7a7a"/><path d="M4 1.500h8" stroke="#f0f0f0" stroke-width="0.800"/><g fill="#fafafa"><rect x="4.5" y="5.6" width="1.500" height="1.400"/><rect x="4.5" y="7.6" width="1.500" height="1.400"/><rect x="4.5" y="9.6" width="1.500" height="1.400"/><rect x="4.5" y="11.5" width="1.500" height="1.400"/><rect x="6.5" y="5.6" width="1.500" height="1.400"/><rect x="6.5" y="7.6" width="1.500" height="1.400"/><rect x="6.5" y="9.6" width="1.500" height="1.400"/><rect x="6.5" y="11.5" width="1.500" height="1.400"/><rect x="8.5" y="5.6" width="1.500" height="1.400"/><rect x="8.5" y="7.6" width="1.500" height="1.400"/><rect x="8.5" y="9.6" width="1.500" height="1.400"/><rect x="8.5" y="11.5" width="1.500" height="1.400"/><rect x="10.3" y="5.6" width="1.500" height="1.400"/><rect x="10.3" y="7.6" width="1.500" height="1.400"/><rect x="10.3" y="9.6" width="1.500" height="1.400"/><rect x="10.3" y="11.5" width="1.500" height="1.400"/></g></symbol><symbol id="gbookgray" overflow="visible"><path d="M0.500 8L6 1.500l9.500 2.500L10.500 11z" fill="#dcdcdc"/><path d="M0.500 8l10 3 5-7v2.500L10.800 14 0.500 10.500z" fill="#f2f2f2" stroke="#c8c8c8" stroke-width="0.600"/><path d="M0.500 8L6 1.500l9.500 2.500" fill="none" stroke="#d0d0d0" stroke-width="0.600"/></symbol><symbol id="gbookF" overflow="visible"><path d="M0.500 9L6 3.500l8.500 2L10 11.500z" fill="#dcdcdc"/><path d="M0.500 9l9.500 2.500 4.500-6v2L10.300 13.500 0.500 10.800z" fill="#f2f2f2" stroke="#c8c8c8" stroke-width="0.600"/><rect x="9.500" y="8.500" width="6" height="7" fill="#f4f4f4" stroke="#9a9a9a"/><path d="M11.500 14v-4h2.500M11.500 12h2" fill="none" stroke="#7f7f7f" stroke-width="1"/></symbol><symbol id="xmlgge" overflow="visible"><path d="M8.500 0.500h6.500v4h-6.500z" fill="#f8f8f8" stroke="#b0b0b0" stroke-width="0.600"/><rect x="3" y="2" width="13" height="6" fill="#0050e8"/><path d="M3.900 3.100L7.100 7.400M7.100 3.100L3.900 7.400M8.200 7.500V3.200L9.900 5.800L11.600 3.200V7.500M13 3V7H15.600" fill="none" stroke="#fff" stroke-width="1.100"/><path d="M0 5l3-2.800v5.600z" fill="#00d890"/><rect x="1" y="8.800" width="14.500" height="6.700" fill="#f4e8f4" stroke="#80687c" stroke-width="0.600"/><path d="M2.500 14.500V10.500H5M6.500 14.500V10.500H9M10.500 10.700Q14 9.800 14 12.500Q14 15.200 10.500 14.300M11.500 12.500H14" fill="none" stroke="#101010" stroke-width="1.300"/></symbol><symbol id="xmlmge" overflow="visible"><path d="M8.500 0.500h6.500v4h-6.500z" fill="#b4b4b4" stroke="#888" stroke-width="0.600"/><rect x="3" y="2" width="13" height="6" fill="#383838"/><path d="M3.900 3.100L7.100 7.400M7.100 3.100L3.900 7.400M8.200 7.500V3.200L9.900 5.800L11.600 3.200V7.500M13 3V7H15.600" fill="none" stroke="#e8e8e8" stroke-width="1.100"/><path d="M0 5l3-2.800v5.600z" fill="#909090"/><rect x="1" y="8.800" width="14.500" height="6.700" fill="#202020"/><path d="M2 14.500V10.500L3.800 13L5.600 10.500V14.500M7 14.500V10.500H9.500M10.800 10.700Q14.300 9.800 14.300 12.500Q14.300 15.200 10.800 14.300M11.800 12.500H14.300" fill="none" stroke="#f4f4f4" stroke-width="1.200"/></symbol><symbol id="gbookgray2" overflow="visible"><path d="M0.500 9L7 2l8.500 2.500L10 11.500z" fill="#d8d8d8"/><path d="M0.500 9l9.500 2.500 5.500-7v2.500L10.300 14.500 0.500 11.500z" fill="#f4f4f4" stroke="#c4c4c4" stroke-width="0.600"/></symbol><symbol id="pct" overflow="visible"><rect x="0.500" y="0.500" width="12" height="11" rx="1" fill="#ececec" stroke="#a8a8a8"/><rect x="4.500" y="5.500" width="11" height="10" fill="#fafafa" stroke="#a8a8a8"/><text x="10" y="14" font-family="Liberation Sans" font-size="9" fill="#7f7f7f" text-anchor="middle">%</text></symbol><symbol id="arrup" overflow="visible"><path d="M5 0L10.200 5.500H7V10H3V5.500H-0.200z" fill="#7f7f7f"/></symbol><symbol id="arrdn" overflow="visible"><path d="M5 10L10.200 4.500H7V0H3V4.500H-0.200z" fill="#7f7f7f"/></symbol><symbol id="bld" overflow="visible"><g shape-rendering="crispEdges"><rect x="5" y="4" width="5" height="12" fill="#2c7ce4"/><rect x="0" y="6" width="5" height="10" fill="#3080e8"/><rect x="10" y="8" width="5" height="8" fill="#3a88ea"/><rect x="0" y="15" width="15" height="1" fill="#2468d0"/><rect x="6" y="5" width="3" height="10" fill="#a8ccf8"/><rect x="1" y="7" width="3" height="8" fill="#a0c8f8"/><rect x="11" y="9" width="3" height="6" fill="#b0d0f8"/><path d="M6 6.500h3M6 8.500h3M6 10.500h3M6 12.500h3M6 14.500h3M1 8.500h3M1 10.500h3M1 12.500h3M1 14.500h3M11 10.500h3M11 12.500h3M11 14.500h3" stroke="#3c86e8" stroke-width="1"/><rect x="5" y="1" width="1" height="3" fill="#303030"/><path d="M6 1h2.500l1.500 1.500h-4z" fill="#f01010"/></g></symbol><symbol id="obj" overflow="visible"><g shape-rendering="crispEdges"><rect x="1" y="1" width="1" height="15" fill="#808080"/><rect x="3" y="1" width="1" height="15" fill="#808080"/><path d="M1 3h3M1 6h3M1 9h3M1 12h3M1 15h5" stroke="#808080" stroke-width="1"/><rect x="1" y="0" width="11" height="1" fill="#808080"/><rect x="0" y="0" width="2" height="2" fill="#9050e0"/><rect x="12" y="0" width="1" height="4" fill="#9050e0"/></g><path d="M8.500 1.500L4.500 8.500h9z" fill="#a070f0" stroke="#7040c0" stroke-width="0.600"/><path d="M13 3v6" stroke="#9060e0" stroke-width="1.500"/><rect x="3.500" y="8" width="11.500" height="2.600" fill="#f06808"/><rect x="3.500" y="8" width="11.500" height="1" fill="#ff9030"/><g shape-rendering="crispEdges"><rect x="7" y="11" width="4" height="5" fill="#2080f0"/><rect x="12" y="11" width="4" height="5" fill="#2080f0"/><path d="M8 12h2M8 14h2M13 12h2M13 14h2" stroke="#c0e0ff" stroke-width="1" stroke-dasharray="1 1"/></g></symbol><symbol id="gbook" overflow="visible"><path d="M0.500 7L5.500 0.500l10 2.500L10.500 9.500z" fill="#3c9c5c"/><path d="M6.500 2.500l5 1.300-0.800 1.200-5-1.300z" fill="#e8f8e8"/><path d="M0.500 7l10 2.500 5-6.500v4.500L10.800 14.500 0.500 11.500z" fill="#e4e8f0"/><path d="M0.500 7l10 2.500 5-6.500v2l-5 6.500-10-2.500z" fill="#2c8048"/><path d="M0.800 10.500l10 3 4.700-6.500" fill="none" stroke="#b0b8c8" stroke-width="0.800"/><path d="M0.800 12l10 3 4.700-6.500" fill="none" stroke="#9aa4b8" stroke-width="0.800"/></symbol><symbol id="lbook" overflow="visible"><path d="M0.500 9L6 1l9.500 2.500L10 11.500z" fill="#38c848"/><path d="M0.500 9l9.500 2.500 5.500-8v2.500L10.300 14.500 0.500 11.500z" fill="#f0f0f0" stroke="#a0a0a0" stroke-width="0.600"/><path d="M0.500 9l9.500 2.500 5.500-8v1l-5.500 8-9.500-2.500z" fill="#189830"/><path d="M3 6l4-4.500 7 1.800" fill="none" stroke="#80e890" stroke-width="0.800"/></symbol><symbol id="gup" overflow="visible"><defs><linearGradient id="lg_g" x1="0" y1="0" x2="0" y2="1"><stop offset="0" stop-color="#5cc484"/><stop offset="1" stop-color="#1a7c44"/></linearGradient></defs><rect x="0.500" y="0.500" width="13" height="13" rx="1.500" fill="url(#lg_g)" stroke="#3c5c48"/><path d="M7 2.500L11.500 7.500H8.800V11.500H5.200V7.500H2.500z" fill="#fff"/></symbol><symbol id="gdn" overflow="visible"><defs><linearGradient id="lg_g" x1="0" y1="0" x2="0" y2="1"><stop offset="0" stop-color="#5cc484"/><stop offset="1" stop-color="#1a7c44"/></linearGradient></defs><rect x="0.500" y="0.500" width="13" height="13" rx="1.500" fill="url(#lg_g)" stroke="#3c5c48"/><path d="M7 11.500L11.500 6.500H8.800V2.500H5.200V6.500H2.500z" fill="#fff"/></symbol><symbol id="gno" overflow="visible"><defs><linearGradient id="lg_gn" x1="0" y1="0" x2="0" y2="1"><stop offset="0" stop-color="#0c8c1c"/><stop offset="1" stop-color="#22aa22"/></linearGradient></defs><rect x="0.500" y="0.500" width="13" height="13" rx="1" fill="url(#lg_gn)" stroke="#3c5c40"/><path d="M3.300 10.500V4L6.800 10.500V4" fill="none" stroke="#fff" stroke-width="1.300"/><circle cx="9.700" cy="5.600" r="1.200" fill="none" stroke="#fff" stroke-width="1"/><path d="M8.300 8.700h2.900" stroke="#fff" stroke-width="1"/></symbol></defs></svg>
<!-- window frame -->
<div class="a" style="left:0;top:0;width:1758px;height:1px;background:#828282"></div>
<div class="a" style="left:0;top:0;width:1px;height:1128px;background:#828282"></div>
<div class="a" style="left:1px;top:1px;width:1px;height:1126px;background:#fff"></div>

<!-- MENU BAR -->
<div id="menubar">
<div class="grip2" style="left:5px;top:3px;height:21px"></div>
<div class="t m" style="left:34px;top:7px"><u>С</u>мета</div>
<div class="t m" style="left:80px;top:7px">Работа</div>
<div class="t m" style="left:130px;top:7px">Информация</div>
<div class="t m" style="left:216px;top:7px">Справочники</div>
<div class="t m" style="left:303px;top:7px">Настройки</div>
<div class="t m" style="left:375px;top:7px">Отдохнуть</div>
<div class="t m" style="left:444px;top:7px">Окно</div>
<div class="t m" style="left:485px;top:7px">Помощь</div>
<div class="t m" style="left:546px;top:7px">Структурные справочники</div>
</div>
<div class="hl" style="left:2px;top:25px;width:1754px;background:#a0a0a0"></div><div class="vl" style="left:1755px;top:1px;height:25px;background:#a0a0a0"></div><div class="vl" style="left:1756px;top:1px;height:100px;background:#fff"></div><div class="vl" style="left:1757px;top:0;height:101px;background:#828282"></div><div class="hl" style="left:1px;top:1px;width:1755px;background:#fff"></div>

<!-- TOOLBAR 1 -->
<div id="tb1"><div class="vl" style="left:2px;top:27px;height:24px;background:#fff"></div><div class="vl" style="left:146px;top:26px;height:26px;background:#a0a0a0"></div><div class="hl" style="left:2px;top:51px;width:144px;background:#a0a0a0"></div><div class="hl" style="left:2px;top:26px;width:144px;background:#fff"></div>
<div class="vl" style="left:147px;top:27px;height:24px;background:#fff"></div><div class="vl" style="left:868px;top:26px;height:26px;background:#a0a0a0"></div><div class="hl" style="left:147px;top:51px;width:721px;background:#a0a0a0"></div><div class="hl" style="left:147px;top:26px;width:721px;background:#fff"></div>
<div class="vl" style="left:892px;top:27px;height:24px;background:#fff"></div><div class="vl" style="left:927px;top:26px;height:26px;background:#a0a0a0"></div><div class="hl" style="left:892px;top:51px;width:35px;background:#a0a0a0"></div><div class="hl" style="left:892px;top:26px;width:35px;background:#fff"></div>
<div class="vl" style="left:928px;top:27px;height:24px;background:#fff"></div><div class="vl" style="left:1061px;top:26px;height:26px;background:#a0a0a0"></div><div class="hl" style="left:928px;top:51px;width:133px;background:#a0a0a0"></div><div class="hl" style="left:928px;top:26px;width:133px;background:#fff"></div>
<div class="vl" style="left:1062px;top:27px;height:24px;background:#fff"></div><div class="vl" style="left:1166px;top:26px;height:26px;background:#a0a0a0"></div><div class="hl" style="left:1062px;top:51px;width:104px;background:#a0a0a0"></div><div class="hl" style="left:1062px;top:26px;width:104px;background:#fff"></div>
<div class="vl" style="left:1167px;top:27px;height:24px;background:#fff"></div><div class="vl" style="left:1277px;top:26px;height:26px;background:#a0a0a0"></div><div class="hl" style="left:1167px;top:51px;width:110px;background:#a0a0a0"></div><div class="hl" style="left:1167px;top:26px;width:110px;background:#fff"></div>
<div class="vl" style="left:1278px;top:27px;height:24px;background:#fff"></div><div class="vl" style="left:1336px;top:26px;height:26px;background:#a0a0a0"></div><div class="hl" style="left:1278px;top:51px;width:58px;background:#a0a0a0"></div><div class="hl" style="left:1278px;top:26px;width:58px;background:#fff"></div>
<div class="grip2" style="left:5px;top:28px;height:22px"></div>
<svg style="left:15px;top:31px" width="16" height="16"><use href="#tree"/></svg>
<svg style="left:38px;top:31px" width="16" height="16"><use href="#treearrow"/></svg>
<div class="vl" style="left:60px;top:28px;height:22px;background:#a0a0a0"></div><div class="vl" style="left:61px;top:28px;height:22px;background:#fff"></div>
<svg style="left:67px;top:31px" width="16" height="16"><use href="#excel"/></svg>
<div class="vl" style="left:89px;top:28px;height:22px;background:#a0a0a0"></div><div class="vl" style="left:90px;top:28px;height:22px;background:#fff"></div>
<svg style="left:96px;top:31px" width="16" height="16"><use href="#pdf"/></svg>
<div class="vl" style="left:118px;top:28px;height:22px;background:#a0a0a0"></div><div class="vl" style="left:119px;top:28px;height:22px;background:#fff"></div>
<svg style="left:125px;top:31px" width="16" height="16"><use href="#mag"/></svg>
<div class="grip2" style="left:151px;top:28px;height:22px"></div>
<svg style="left:161px;top:31px" width="16" height="16"><use href="#save"/></svg>
<svg style="left:184px;top:31px" width="16" height="16"><use href="#refresh"/></svg>
<svg style="left:207px;top:31px" width="16" height="16"><use href="#undo"/></svg>
<div class="vl" style="left:229px;top:28px;height:22px;background:#a0a0a0"></div><div class="vl" style="left:230px;top:28px;height:22px;background:#fff"></div>
<svg style="left:237px;top:31px" width="16" height="16"><use href="#undoblue"/></svg>
<div class="vl" style="left:258px;top:28px;height:22px;background:#a0a0a0"></div><div class="vl" style="left:259px;top:28px;height:22px;background:#fff"></div>
<svg style="left:266px;top:31px" width="16" height="16"><use href="#stack1"/></svg>
<svg style="left:289px;top:31px" width="16" height="16"><use href="#stack2"/></svg>
<svg style="left:311px;top:31px" width="16" height="16"><use href="#bubble"/></svg>
<div class="vl" style="left:333px;top:28px;height:22px;background:#a0a0a0"></div><div class="vl" style="left:334px;top:28px;height:22px;background:#fff"></div>
<svg style="left:340px;top:31px" width="16" height="16"><use href="#bowl"/></svg>
<svg style="left:363px;top:33px" width="16" height="16"><use href="#bldgray"/></svg>
<div class="t m g" style="left:387px;top:32px">Изменить тип строки...</div>
<div class="vl" style="left:520px;top:28px;height:22px;background:#a0a0a0"></div><div class="vl" style="left:521px;top:28px;height:22px;background:#fff"></div>
<svg style="left:529px;top:33px" width="16" height="16"><use href="#xgray"/></svg>
<div class="vl" style="left:549px;top:28px;height:22px;background:#a0a0a0"></div><div class="vl" style="left:550px;top:28px;height:22px;background:#fff"></div>
<svg style="left:556px;top:31px" width="16" height="16"><use href="#calccoin"/></svg>
<svg style="left:579px;top:31px" width="16" height="16"><use href="#docpm"/></svg>
<svg style="left:606px;top:31px" width="16" height="16"><use href="#pm"/></svg>
<div class="vl" style="left:624px;top:28px;height:22px;background:#a0a0a0"></div><div class="vl" style="left:625px;top:28px;height:22px;background:#fff"></div>
<svg style="left:632px;top:31px" width="16" height="16"><use href="#scissors"/></svg>
<svg style="left:654px;top:31px" width="16" height="16"><use href="#copy"/></svg>
<svg style="left:677px;top:31px" width="16" height="16"><use href="#paste"/></svg>
<div class="vl" style="left:699px;top:28px;height:22px;background:#a0a0a0"></div><div class="vl" style="left:700px;top:28px;height:22px;background:#fff"></div>
<div class="t m g" style="left:707px;top:32px">Копировать в смету</div>
<svg style="left:824px;top:31px" width="16" height="16"><use href="#copylight"/></svg>
<svg style="left:847px;top:31px" width="16" height="16"><use href="#pasteyel"/></svg>
<div class="grip2" style="left:896px;top:28px;height:22px"></div>
<div class="grip2" style="left:932px;top:28px;height:22px"></div>
<svg style="left:942px;top:31px" width="16" height="16"><use href="#bookgear"/></svg>
<svg style="left:965px;top:31px" width="16" height="16"><use href="#pboxP"/></svg>
<svg style="left:988px;top:31px" width="16" height="16"><use href="#pboxPR"/></svg>
<div class="vl" style="left:1010px;top:28px;height:22px;background:#a0a0a0"></div><div class="vl" style="left:1011px;top:28px;height:22px;background:#fff"></div>
<svg style="left:1017px;top:31px" width="16" height="16"><use href="#treeedit"/></svg>
<svg style="left:1040px;top:31px" width="16" height="16"><use href="#treex"/></svg>
<div class="grip2" style="left:1066px;top:28px;height:22px"></div>
<svg style="left:1076px;top:31px" width="16" height="16"><use href="#ln1"/></svg>
<svg style="left:1099px;top:31px" width="16" height="16"><use href="#ln2"/></svg>
<svg style="left:1122px;top:31px" width="16" height="16"><use href="#ln3"/></svg>
<svg style="left:1145px;top:31px" width="16" height="16"><use href="#ln4"/></svg>
<div class="grip2" style="left:1171px;top:28px;height:22px"></div>
<svg style="left:1181px;top:31px" width="16" height="16"><use href="#hammer"/></svg>
<svg style="left:1204px;top:31px" width="16" height="16"><use href="#truck"/></svg>
<svg style="left:1227px;top:31px" width="16" height="16"><use href="#bricks"/></svg>
<div class="vl" style="left:1249px;top:28px;height:22px;background:#a0a0a0"></div><div class="vl" style="left:1250px;top:28px;height:22px;background:#fff"></div>
<svg style="left:1256px;top:31px" width="16" height="16"><use href="#truckload"/></svg>
<div class="grip2" style="left:1282px;top:28px;height:22px"></div>
<svg style="left:1292px;top:31px" width="16" height="16"><use href="#booksred"/></svg>
<svg style="left:1315px;top:31px" width="16" height="16"><use href="#booksblue"/></svg>
<div class="vl" style="left:2px;top:53px;height:24px;background:#fff"></div><div class="vl" style="left:889px;top:52px;height:26px;background:#a0a0a0"></div><div class="hl" style="left:2px;top:77px;width:887px;background:#a0a0a0"></div><div class="hl" style="left:2px;top:52px;width:887px;background:#fff"></div>
<svg style="left:877px;top:63px" width="6" height="3"><path d="M0 0h5.600L2.800 3z" fill="#000"/></svg></div>

<!-- TOOLBAR 2 -->
<div id="tb2">
<div class="grip2" style="left:5px;top:54px;height:22px"></div>
<div class="t m g" style="left:16px;top:58px">Ресурсы</div>
<div class="t m g" style="left:72px;top:58px">Панель цен</div>
<div class="t m g" style="left:145px;top:58px">Лимит. затраты</div>
<div class="t m g" style="left:238px;top:58px">ЭСН</div>
<div class="t m g" style="left:272px;top:58px">Состав работ</div>
<div class="t m g" style="left:354px;top:58px">Тех. часть</div>
<div class="t m g" style="left:417px;top:58px">Индексы</div>
<div class="t m g" style="left:475px;top:58px">Поправки</div>
<div class="t m g" style="left:539px;top:58px">Формулы</div>
<div class="t m g" style="left:602px;top:58px">Структура</div>
<div class="t m g" style="left:667px;top:58px">Оглавление</div>
<div class="t m" style="left:744px;top:58px;letter-spacing:0.2px">Список открытых окон</div>
</div>
<div class="hl" style="left:2px;top:78px;width:1754px;background:#fff"></div>

<!-- TOOLBAR 3 -->
<div id="tb3"><svg style="left:3px;top:82px" width="16" height="16"><use href="#foldernew"/></svg>
<svg style="left:27px;top:82px" width="16" height="16"><use href="#docnew"/></svg>
<svg style="left:50px;top:82px" width="16" height="16"><use href="#xlight"/></svg>
<div class="vl" style="left:71px;top:79px;height:22px;background:#a0a0a0"></div><div class="vl" style="left:72px;top:79px;height:22px;background:#fff"></div>
<svg style="left:78px;top:82px" width="16" height="16"><use href="#folderarrow"/></svg>
<svg style="left:101px;top:81px" width="16" height="16"><use href="#folderdown"/></svg>
<div class="vl" style="left:123px;top:79px;height:22px;background:#a0a0a0"></div><div class="vl" style="left:124px;top:79px;height:22px;background:#fff"></div>
<svg style="left:130px;top:82px" width="16" height="16"><use href="#docq"/></svg>
<div class="a dith" style="left:347px;top:79px;width:23px;height:22px;border:1px solid;border-color:#a0a0a0 #fff #fff #a0a0a0"></div>
<svg style="left:328px;top:83px" width="16" height="16"><use href="#treeblack"/></svg>
<svg style="left:351px;top:83px" width="16" height="16"><use href="#house"/></svg>
<div class="vl" style="left:372px;top:79px;height:22px;background:#a0a0a0"></div><div class="vl" style="left:373px;top:79px;height:22px;background:#fff"></div>
<svg style="left:379px;top:82px" width="16" height="16"><use href="#foldernew"/></svg>
<svg style="left:403px;top:82px" width="16" height="16"><use href="#docnew"/></svg>
<svg style="left:426px;top:82px" width="16" height="16"><use href="#xlight"/></svg>
<div class="vl" style="left:447px;top:79px;height:22px;background:#a0a0a0"></div><div class="vl" style="left:448px;top:79px;height:22px;background:#fff"></div>
<svg style="left:454px;top:83px" width="16" height="16"><use href="#pctwin"/></svg>
<svg style="left:477px;top:82px" width="16" height="16"><use href="#doclines"/></svg>
<svg style="left:500px;top:82px" width="16" height="16"><use href="#doctag"/></svg>
<svg style="left:523px;top:82px" width="16" height="16"><use href="#folder"/></svg>
<svg style="left:546px;top:82px" width="16" height="16"><use href="#foldersum"/></svg>
<div class="vl" style="left:568px;top:79px;height:22px;background:#a0a0a0"></div><div class="vl" style="left:569px;top:79px;height:22px;background:#fff"></div>
<svg style="left:575px;top:83px" width="16" height="16"><use href="#calc"/></svg>
<div class="vl" style="left:597px;top:79px;height:22px;background:#a0a0a0"></div><div class="vl" style="left:598px;top:79px;height:22px;background:#fff"></div>
<svg style="left:604px;top:83px" width="16" height="16"><use href="#gbookgray"/></svg>
<svg style="left:627px;top:82px" width="16" height="16"><use href="#gbookF"/></svg>
<svg style="left:650px;top:82px" width="16" height="16"><use href="#excel"/></svg>
<svg style="left:673px;top:82px" width="16" height="16"><use href="#pdf"/></svg>
<svg style="left:696px;top:82px" width="16" height="16"><use href="#xmlgge"/></svg>
<svg style="left:719px;top:82px" width="16" height="16"><use href="#xmlmge"/></svg>
<div class="vl" style="left:741px;top:79px;height:22px;background:#a0a0a0"></div><div class="vl" style="left:742px;top:79px;height:22px;background:#fff"></div>
<svg style="left:748px;top:83px" width="16" height="16"><use href="#gbookgray2"/></svg>
<div class="vl" style="left:770px;top:79px;height:22px;background:#a0a0a0"></div><div class="vl" style="left:771px;top:79px;height:22px;background:#fff"></div>
<svg style="left:777px;top:82px" width="16" height="16"><use href="#pct"/></svg>
<div class="vl" style="left:799px;top:79px;height:22px;background:#a0a0a0"></div><div class="vl" style="left:800px;top:79px;height:22px;background:#fff"></div>
<svg style="left:809px;top:85px" width="16" height="16"><use href="#arrup"/></svg>
<svg style="left:832px;top:85px" width="16" height="16"><use href="#arrdn"/></svg>
<div class="vl" style="left:851px;top:79px;height:22px;background:#a0a0a0"></div><div class="vl" style="left:852px;top:79px;height:22px;background:#fff"></div>
<div class="t" style="left:861px;top:83px;letter-spacing:-0.2px">Вид ССР ЕРКР (ТСН-2001)</div>
<div class="btn" style="left:1701px;top:6px;width:17px;height:15px"></div><div class="a" style="left:1705px;top:16px;width:7px;height:2px;background:#000"></div>
<div class="btn" style="left:1718px;top:6px;width:17px;height:15px"></div><svg style="left:1721px;top:8px" width="10" height="10" shape-rendering="crispEdges"><rect x="3" y="0.500" width="6" height="5" fill="none" stroke="#000"/><rect x="3" y="0" width="7" height="2" fill="#000"/><rect x="0.500" y="3.500" width="6" height="5" fill="#f0f0f0" stroke="#000"/><rect x="0" y="3" width="7" height="2" fill="#000"/></svg>
<div class="btn" style="left:1737px;top:6px;width:17px;height:15px"></div><svg style="left:1741px;top:9px" width="8" height="8"><path d="M0.500 0.500L7.500 7M7.500 0.500L0.500 7" stroke="#000" stroke-width="2"/></svg></div>

<!-- LEFT PANEL -->
<div id="left">
<div class="t" style="left:7px;top:103px">ЛС, входящие в проект</div>
<!-- tree box -->
<div class="a" style="left:0px;top:118px;width:321px;height:810px;background:#fff;border:1px solid;border-color:#a0a0a0 #a0a0a0 #a0a0a0 #828282"></div><div class="hl" style="left:1px;top:928px;width:319px;background:#fff"></div>
<div id="tree">
<!-- dotted lines -->
<div class="dv" style="left:29px;top:134px;height:106px"></div>
<div class="dh" style="left:16px;top:128px;width:6px"></div>
<div class="dh" style="left:35px;top:144px;width:6px"></div>
<div class="dh" style="left:35px;top:160px;width:6px"></div>
<div class="dh" style="left:35px;top:208px;width:6px"></div>
<div class="dh" style="left:35px;top:240px;width:6px"></div>
<div class="dv" style="left:48px;top:168px;height:24px"></div>
<div class="dh" style="left:49px;top:176px;width:11px"></div>
<div class="dh" style="left:49px;top:192px;width:11px"></div>
<div class="dv" style="left:48px;top:216px;height:8px"></div>
<div class="dh" style="left:49px;top:224px;width:11px"></div>
<!-- plus/minus -->
<div class="pm" style="left:6px;top:124px"></div>
<div class="pm p" style="left:25px;top:140px"></div>
<div class="pm" style="left:25px;top:156px"></div>
<div class="pm" style="left:25px;top:204px"></div>
<div class="pm p" style="left:25px;top:236px"></div>
<!-- checkboxes -->
<div class="cb" style="left:23px;top:122px"></div>
<div class="cb" style="left:42px;top:138px"></div>
<div class="cb" style="left:42px;top:154px"></div>
<div class="cb" style="left:61px;top:170px"></div>
<div class="cb" style="left:61px;top:186px"></div>
<div class="cb" style="left:42px;top:202px"></div>
<div class="cb" style="left:61px;top:218px"></div>
<div class="cb" style="left:42px;top:234px"></div>
<!-- icons -->
<svg class="i-bld" style="left:38px;top:120px" width="16" height="16"><use href="#bld"/></svg>
<svg style="left:56px;top:136px" width="16" height="16"><use href="#obj"/></svg>
<svg style="left:56px;top:152px" width="16" height="16"><use href="#obj"/></svg>
<svg style="left:75px;top:168px" width="16" height="16"><use href="#gbook"/></svg>
<svg style="left:75px;top:184px" width="16" height="16"><use href="#gbook"/></svg>
<svg style="left:56px;top:200px" width="16" height="16"><use href="#obj"/></svg>
<svg style="left:75px;top:216px" width="16" height="16"><use href="#gbook"/></svg>
<svg style="left:56px;top:232px" width="16" height="16"><use href="#obj"/></svg>
<!-- text -->
<div class="t" style="left:59px;top:121px;letter-spacing:0.1px">Здание спортивного комплекса</div>
<div class="t" style="left:77px;top:137px;width:242px;overflow:hidden;letter-spacing:0.15px">Объекты подсобного и обслуживающего назначения</div>
<div class="t" style="left:77px;top:153px;letter-spacing:0.1px">Основные объекты строительства</div>
<div class="t" style="left:96px;top:169px;letter-spacing:0.1px">Устройство котлована</div>
<div class="t" style="left:96px;top:185px;letter-spacing:0.1px">Фундамент</div>
<div class="t" style="left:77px;top:201px;letter-spacing:0.1px">Подготовка территории строительства</div>
<div class="a" style="left:94px;top:216px;width:181px;height:16px;background:#0078d7"></div>
<div class="t" style="left:96px;top:217px;color:#fff">Подготовительные работы (смета)</div>
<div class="t" style="left:77px;top:233px;letter-spacing:0.1px">Строительство школы</div>
</div>
<!-- hscroll -->
<div class="a" style="left:2px;top:910px;width:317px;height:17px;background:#f0f0f0"></div>
<div class="a" style="left:19px;top:911px;width:258px;height:15px;background:#cdcdcd"></div>
<svg style="left:6px;top:913px" width="8" height="11"><path d="M6.5 1.5L2.5 5.5L6.5 9.5" fill="none" stroke="#555" stroke-width="1.8"/></svg>
<svg style="left:307px;top:913px" width="8" height="11"><path d="M1.5 1.5L5.5 5.5L1.5 9.5" fill="none" stroke="#555" stroke-width="1.8"/></svg>
<!-- under tree -->
<div class="hl" style="left:1px;top:929px;width:319px;background:#a0a0a0"></div>
<div class="hl" style="left:1px;top:930px;width:319px;background:#fff"></div>
<div class="t" style="left:6px;top:935px;letter-spacing:0.1px">Всего элементов в проекте: 9</div>
<div class="t" style="left:7px;top:953px;letter-spacing:0.1px">Осталось перенести в главы сводного расчёта: 6</div>
<svg style="left:7px;top:977px" width="14" height="14"><use href="#gup"/></svg>
<svg style="left:29px;top:977px" width="14" height="14"><use href="#gdn"/></svg>
<svg style="left:58px;top:977px" width="14" height="14"><use href="#gno"/></svg>
<div class="btn" style="left:84px;top:972px;width:229px;height:24px"></div>
<div class="t" style="left:84px;top:978px;width:229px;text-align:center">Перенести сметы в ССР</div>
<div class="hl" style="left:1px;top:1001px;width:319px;background:#a0a0a0"></div>
<div class="hl" style="left:1px;top:1002px;width:319px;background:#fff"></div>
<div class="t" style="left:6px;top:1006px">Вносить элементы в сводный расчёт до</div>
<div class="a" style="left:6px;top:1023px;width:307px;height:20px;background:#fff;border:1px solid;border-color:#a0a0a0 #fff #fff #a0a0a0"></div>
<svg style="left:10px;top:1026px" width="16" height="16"><use href="#lbook"/></svg>
<div class="t" style="left:29px;top:1027px;letter-spacing:0.1px">Локальных смет</div>
<div class="a" style="left:297px;top:1025px;width:15px;height:17px;background:#f0f0f0;border:1px solid;border-color:#e3e3e3 #a0a0a0 #a0a0a0 #e3e3e3"></div>
<svg style="left:300px;top:1031px" width="9" height="5"><path d="M0 0h8L4 4.5z" fill="#000"/></svg>
<!-- panel edges -->
<div class="vl" style="left:320px;top:118px;height:936px;background:#a0a0a0"></div>
<div class="hl" style="left:1px;top:1053px;width:320px;background:#a0a0a0"></div>
</div>

<!-- RIGHT PANEL -->
<div id="right">
<!-- right panel bevel -->
<div class="hl" style="left:324px;top:101px;width:1432px;background:#fff"></div>
<div class="hl" style="left:325px;top:102px;width:1430px;background:#e3e3e3"></div>
<div class="vl" style="left:324px;top:101px;height:931px;background:#fff"></div>
<div class="vl" style="left:325px;top:102px;height:930px;background:#e3e3e3"></div>
<div class="a" style="left:329px;top:106px;width:1423px;height:863px;background:#fff"></div>
<div class="hl" style="left:328px;top:105px;width:1424px;background:#8c8c8c"></div>
<div class="vl" style="left:328px;top:105px;height:863px;background:#8c8c8c"></div>
<div class="vl" style="left:1752px;top:105px;height:864px;background:#fff"></div>
<div class="a" style="left:329px;top:106px;width:861px;height:72px;background:#f0f0f0"></div>
<div class="a" style="left:329px;top:178px;width:12px;height:112px;background:#f0f0f0"></div>
<div class="hl" style="left:329px;top:106px;width:11px;background:#fff"></div>
<div class="vl" style="left:329px;top:106px;height:71px;background:#fff"></div>
<div class="hl" style="left:341px;top:106px;width:244px;background:#fff"></div>
<div class="vl" style="left:341px;top:106px;height:71px;background:#fff"></div>
<div class="hl" style="left:586px;top:106px;width:603px;background:#fff"></div>
<div class="vl" style="left:586px;top:106px;height:22px;background:#fff"></div>
<div class="hl" style="left:586px;top:129px;width:150px;background:#fff"></div>
<div class="vl" style="left:586px;top:129px;height:48px;background:#fff"></div>
<div class="hl" style="left:737px;top:129px;width:150px;background:#fff"></div>
<div class="vl" style="left:737px;top:129px;height:48px;background:#fff"></div>
<div class="hl" style="left:888px;top:129px;width:150px;background:#fff"></div>
<div class="vl" style="left:888px;top:129px;height:48px;background:#fff"></div>
<div class="hl" style="left:1039px;top:129px;width:150px;background:#fff"></div>
<div class="vl" style="left:1039px;top:129px;height:48px;background:#fff"></div>
<div class="hl" style="left:329px;top:178px;width:11px;background:#fff"></div>
<div class="vl" style="left:329px;top:178px;height:15px;background:#fff"></div>
<div class="hl" style="left:329px;top:194px;width:11px;background:#fff"></div>
<div class="vl" style="left:329px;top:194px;height:15px;background:#fff"></div>
<div class="hl" style="left:329px;top:210px;width:11px;background:#fff"></div>
<div class="vl" style="left:329px;top:210px;height:15px;background:#fff"></div>
<div class="hl" style="left:329px;top:226px;width:11px;background:#fff"></div>
<div class="vl" style="left:329px;top:226px;height:15px;background:#fff"></div>
<div class="hl" style="left:329px;top:242px;width:11px;background:#fff"></div>
<div class="vl" style="left:329px;top:242px;height:15px;background:#fff"></div>
<div class="hl" style="left:329px;top:258px;width:11px;background:#fff"></div>
<div class="vl" style="left:329px;top:258px;height:15px;background:#fff"></div>
<div class="hl" style="left:329px;top:274px;width:11px;background:#fff"></div>
<div class="vl" style="left:329px;top:274px;height:15px;background:#fff"></div>
<div class="vl" style="left:340px;top:106px;height:72px;background:#808080"></div>
<div class="vl" style="left:585px;top:106px;height:72px;background:#808080"></div>
<div class="vl" style="left:736px;top:129px;height:49px;background:#808080"></div>
<div class="vl" style="left:887px;top:129px;height:49px;background:#808080"></div>
<div class="vl" style="left:1038px;top:129px;height:49px;background:#808080"></div>
<div class="vl" style="left:1189px;top:106px;height:72px;background:#808080"></div>
<div class="hl" style="left:586px;top:128px;width:604px;background:#808080"></div>
<div class="hl" style="left:330px;top:177px;width:860px;background:#808080"></div>
<div class="t" style="left:341px;top:135px;width:244px;text-align:center">Наименование затрат</div>
<div class="t" style="left:586px;top:111px;width:603px;text-align:center">Сметная стоимость, тыс.руб.</div>
<div class="t" style="left:586px;top:134px;width:150px;text-align:center;letter-spacing:0.2px">объектов</div><div class="t" style="left:586px;top:147px;width:150px;text-align:center;letter-spacing:0.2px">производственного</div><div class="t" style="left:586px;top:160px;width:150px;text-align:center;letter-spacing:0.2px">назначения</div>
<div class="t" style="left:737px;top:134px;width:150px;text-align:center;letter-spacing:0.2px">объектов</div><div class="t" style="left:737px;top:147px;width:150px;text-align:center;letter-spacing:0.2px">непроизводственного</div><div class="t" style="left:737px;top:160px;width:150px;text-align:center;letter-spacing:0.2px">назначения</div>
<div class="t" style="left:888px;top:147px;width:150px;text-align:center">всего</div>
<div class="t" style="left:1039px;top:147px;width:150px;text-align:center">в ССР</div>
<div class="hl" style="left:341px;top:193px;width:849px;background:#c0c0c0"></div>
<div class="hl" style="left:330px;top:193px;width:10px;background:#808080"></div>
<div class="hl" style="left:341px;top:209px;width:849px;background:#c0c0c0"></div>
<div class="hl" style="left:330px;top:209px;width:10px;background:#808080"></div>
<div class="hl" style="left:341px;top:225px;width:849px;background:#c0c0c0"></div>
<div class="hl" style="left:330px;top:225px;width:10px;background:#808080"></div>
<div class="hl" style="left:341px;top:241px;width:849px;background:#c0c0c0"></div>
<div class="hl" style="left:330px;top:241px;width:10px;background:#808080"></div>
<div class="hl" style="left:341px;top:257px;width:849px;background:#c0c0c0"></div>
<div class="hl" style="left:330px;top:257px;width:10px;background:#808080"></div>
<div class="hl" style="left:341px;top:273px;width:849px;background:#c0c0c0"></div>
<div class="hl" style="left:330px;top:273px;width:10px;background:#808080"></div>
<div class="hl" style="left:341px;top:289px;width:849px;background:#c0c0c0"></div>
<div class="hl" style="left:330px;top:289px;width:10px;background:#808080"></div>
<div class="vl" style="left:585px;top:178px;height:112px;background:#c0c0c0"></div>
<div class="vl" style="left:736px;top:178px;height:112px;background:#c0c0c0"></div>
<div class="vl" style="left:887px;top:178px;height:112px;background:#c0c0c0"></div>
<div class="vl" style="left:1038px;top:178px;height:112px;background:#c0c0c0"></div>
<div class="vl" style="left:1189px;top:178px;height:112px;background:#c0c0c0"></div>
<div class="vl" style="left:340px;top:178px;height:112px;background:#808080"></div>
<div class="t b" style="left:343px;top:179px">Сметная стоимость:</div>
<div class="num" style="left:674px;top:179px">0,00</div>
<div class="num" style="left:825px;top:179px">31 754,03</div>
<div class="num" style="left:976px;top:179px">31 754,03</div>
<div class="num" style="left:1127px;top:179px">31 754,03</div>
<div class="t" style="left:355px;top:195px">строительных и монтажных работ</div>
<div class="num" style="left:674px;top:195px">0,00</div>
<div class="num" style="left:825px;top:195px">31 690,65</div>
<div class="num" style="left:976px;top:195px">31 690,65</div>
<div class="num" style="left:1127px;top:195px">31 690,65</div>
<div class="t" style="left:355px;top:211px">оборудования</div>
<div class="num" style="left:674px;top:211px">0,00</div>
<div class="num" style="left:825px;top:211px">0,00</div>
<div class="num" style="left:976px;top:211px">0,00</div>
<div class="num" style="left:1127px;top:211px">0,00</div>
<div class="t" style="left:355px;top:227px">прочих работ</div>
<div class="num" style="left:674px;top:227px">0,00</div>
<div class="num" style="left:825px;top:227px">63,38</div>
<div class="num" style="left:976px;top:227px">63,38</div>
<div class="num" style="left:1127px;top:227px">63,38</div>
<div class="t b" style="left:343px;top:243px">Сметная стоимость всего, в том числе</div>
<div class="num" style="left:674px;top:243px">0,00</div>
<div class="num" style="left:825px;top:243px">31 754,03</div>
<div class="num" style="left:976px;top:243px">31 754,03</div>
<div class="num" style="left:1127px;top:243px">31 754,03</div>
<div class="t" style="left:355px;top:259px">возвратных сумм</div>
<div class="num" style="left:674px;top:259px">0,00</div>
<div class="num" style="left:825px;top:259px">0,00</div>
<div class="num" style="left:976px;top:259px">0,00</div>
<div class="num" style="left:1127px;top:259px">0,00</div>
<div class="a" style="left:341px;top:274px;width:244px;height:15px;background-image:repeating-conic-gradient(#ff8000 0 25%,#000 0 50%);background-size:2px 2px"></div><div class="a" style="left:342px;top:275px;width:242px;height:13px;background:#0078d7"></div>
<div class="t" style="left:355px;top:275px;color:#fff">НДС</div>
<div class="num" style="left:674px;top:275px">0,00</div>
<div class="num" style="left:825px;top:275px">26 461,70</div>
<div class="num" style="left:976px;top:275px">26 461,70</div>
<div class="num" style="left:1127px;top:275px">26 461,70</div>
<svg style="left:332px;top:276px" width="6" height="11"><path d="M0 0L6 5.500L0 11z" fill="#000"/></svg>
<div class="a" style="left:1736px;top:106px;width:16px;height:862px;background:#f0f0f0"></div>
<div class="a" style="left:1736px;top:505px;width:15px;height:446px;background:#cdcdcd"></div>
<svg style="left:1739px;top:111px" width="11" height="8"><path d="M1.5 6.5L5.5 2.5L9.5 6.5" fill="none" stroke="#555" stroke-width="1.8"/></svg>
<svg style="left:1739px;top:956px" width="11" height="8"><path d="M1.5 1.5L5.5 5.5L9.5 1.5" fill="none" stroke="#555" stroke-width="1.8"/></svg>
<div class="sunk dith" style="left:328px;top:969px;width:47px;height:21px"></div>
<div class="t" style="left:335px;top:975px">5 граф</div>
<div class="t" style="left:379px;top:974px">15 граф</div>
<div class="hl" style="left:328px;top:998px;width:1426px;background:#a0a0a0"></div>
<div class="hl" style="left:328px;top:999px;width:1426px;background:#fff"></div>
<div class="sunk dith" style="left:328px;top:1002px;width:75px;height:21px"></div>
<div class="t" style="left:332px;top:1008px">2000, Январь</div>
<div class="t" style="left:412px;top:1007px">2025, Март</div>
<div class="a" style="left:324px;top:1032px;width:1432px;height:2px;background:#696969"></div>
<div class="a" style="left:328px;top:1034px;width:38px;height:17px;border-bottom:2px solid #696969;border-right:1px solid #696969"></div>
<div class="t" style="left:332px;top:1036px">ССР</div>
<div class="a" style="left:368px;top:1032px;width:87px;height:21px;background:#f0f0f0;border-bottom:2px solid #696969;border-right:1px solid #696969;border-left:1px solid #fff"></div>
<div class="t" style="left:375px;top:1038px">Сводка затрат</div>
<div class="a" style="left:455px;top:1034px;width:86px;height:17px;border:1px solid #404040;border-top:none;border-bottom:2px solid #404040;border-radius:0 0 3px 3px"></div>
<div class="t" style="left:460px;top:1036px">Предпросмотр</div>
<div class="vl" style="left:1755px;top:102px;height:932px;background:#a0a0a0"></div><div class="vl" style="left:1756px;top:101px;height:933px;background:#696969"></div><div class="vl" style="left:1757px;top:101px;height:933px;background:#828282"></div>
</div>

<!-- BOTTOM -->
<div id="bottom">
<div class="hl" style="left:1px;top:1054px;width:1754px;background:#fff"></div>
<div class="hl" style="left:1px;top:1055px;width:1754px;background:#a0a0a0"></div>
<div class="a" style="left:0;top:1056px;width:2px;height:38px;background:#808080"></div>
<div class="btn" style="left:1634px;top:1064px;width:113px;height:22px"></div>
<div class="t" style="left:1634px;top:1068px;width:113px;text-align:center">Закрыть</div>
<div class="hl" style="left:1px;top:1094px;width:1755px;background:#fff"></div>
<div class="hl" style="left:1px;top:1095px;width:1756px;background:#a0a0a0"></div>
<div class="hl" style="left:1px;top:1096px;width:1756px;background:#fff"></div>
<div class="sunk" style="left:3px;top:1099px;width:85px;height:26px"></div>
<div class="vl" style="left:89px;top:1097px;height:29px;background:#a0a0a0"></div><div class="vl" style="left:90px;top:1097px;height:29px;background:#fff"></div>
<div class="sunk" style="left:92px;top:1099px;width:296px;height:26px"></div>
<div class="vl" style="left:389px;top:1097px;height:29px;background:#a0a0a0"></div><div class="vl" style="left:390px;top:1097px;height:29px;background:#fff"></div>
<div class="sunk" style="left:392px;top:1099px;width:1294px;height:26px"></div>
<div class="vl" style="left:1687px;top:1097px;height:29px;background:#a0a0a0"></div><div class="vl" style="left:1688px;top:1097px;height:29px;background:#fff"></div>
<div class="sunk" style="left:1690px;top:1099px;width:30px;height:26px"></div>
<div class="vl" style="left:1721px;top:1097px;height:29px;background:#a0a0a0"></div><div class="vl" style="left:1722px;top:1097px;height:29px;background:#fff"></div>
<div class="sunk" style="left:1724px;top:1099px;width:30px;height:26px"></div>
<div class="vl" style="left:1755px;top:1097px;height:29px;background:#a0a0a0"></div><div class="vl" style="left:1756px;top:1097px;height:29px;background:#fff"></div>
<div class="t m" style="left:1724px;top:1105px;width:30px;text-align:center;font-size:11.5px;letter-spacing:-0.6px">RU</div>
<svg style="left:1697px;top:1104px" width="16" height="16"><rect x="0.300" y="0.300" width="15.400" height="15.400" rx="5" fill="#9c9c9c"/><rect x="7" y="3" width="2" height="2" fill="#fff"/><rect x="7" y="6.500" width="2" height="6.500" fill="#fff"/><path d="M0.500 0.500L15.500 15" stroke="#ff0000" stroke-width="1.900"/></svg>
<div class="hl" style="left:0;top:1126px;width:1758px;background:#909090"></div>
<div class="hl" style="left:0;top:1127px;width:1758px;background:#787878"></div>
<div class="vl" style="left:1755px;top:1034px;height:61px;background:#f8f8f8"></div>
<div class="vl" style="left:1756px;top:1034px;height:61px;background:#fff"></div>
<div class="vl" style="left:1757px;top:1034px;height:94px;background:#828282"></div>
</div>

<!-- CONTEXT MENU -->
<div id="ctx">
<div class="a" style="left:761px;top:393px;width:292px;height:106px;background:#f0f0f0;border:1px solid #a0a0a0"></div>
<div class="t m" style="left:786px;top:400px">Учитывать ПНР только "Вхолостую"</div>
<div class="t m" style="left:1006px;top:400px">Ctrl+T</div>
<div class="t m" style="left:786px;top:421px">Обновить признак ПР/НПР для ЛС/ОСР</div>
<div class="hl" style="left:765px;top:442px;width:284px;background:#a0a0a0"></div>
<div class="hl" style="left:765px;top:443px;width:284px;background:#fff"></div>
<div class="t m" style="left:786px;top:450px">Экспорт</div>
<svg style="left:1039px;top:452px" width="4" height="7"><path d="M0 0L4 3.500L0 7z" fill="#000"/></svg>
<div class="hl" style="left:765px;top:471px;width:284px;background:#a0a0a0"></div>
<div class="hl" style="left:765px;top:472px;width:284px;background:#fff"></div>
<div class="a" style="left:764px;top:475px;width:286px;height:21px;background:#0078d7"></div>
<div class="t m" style="left:786px;top:479px;color:#fff">Показывать итоги</div>
<svg style="left:1039px;top:481px" width="4" height="7"><path d="M0 0L4 3.500L0 7z" fill="#fff"/></svg>
<!-- submenu -->
<div class="a" style="left:1047px;top:472px;width:140px;height:69px;background:#f0f0f0;border:1px solid #a0a0a0"></div>
<div class="t m" style="left:1072px;top:479px">До рублей</div>
<div class="t m" style="left:1072px;top:500px">До тысяч</div>
<div class="t m" style="left:1072px;top:521px">До миллионов</div>
<div class="sunk dith" style="left:1051px;top:497px;width:18px;height:20px"></div><svg style="left:1056px;top:504px" width="8" height="8"><path d="M0.800 3.800L3 6.200L7.200 1" fill="none" stroke="#000" stroke-width="1.900"/></svg>
<!-- red arrow -->
<svg style="left:680px;top:436px" width="90" height="60"><path d="M6.900 7.300L61 41.700" stroke="#ff0000" stroke-width="2.800"/><path d="M79.800 53.900L55.600 47.700L64.300 34.700z" fill="#ff0000"/></svg>
</div>
</body></html>
